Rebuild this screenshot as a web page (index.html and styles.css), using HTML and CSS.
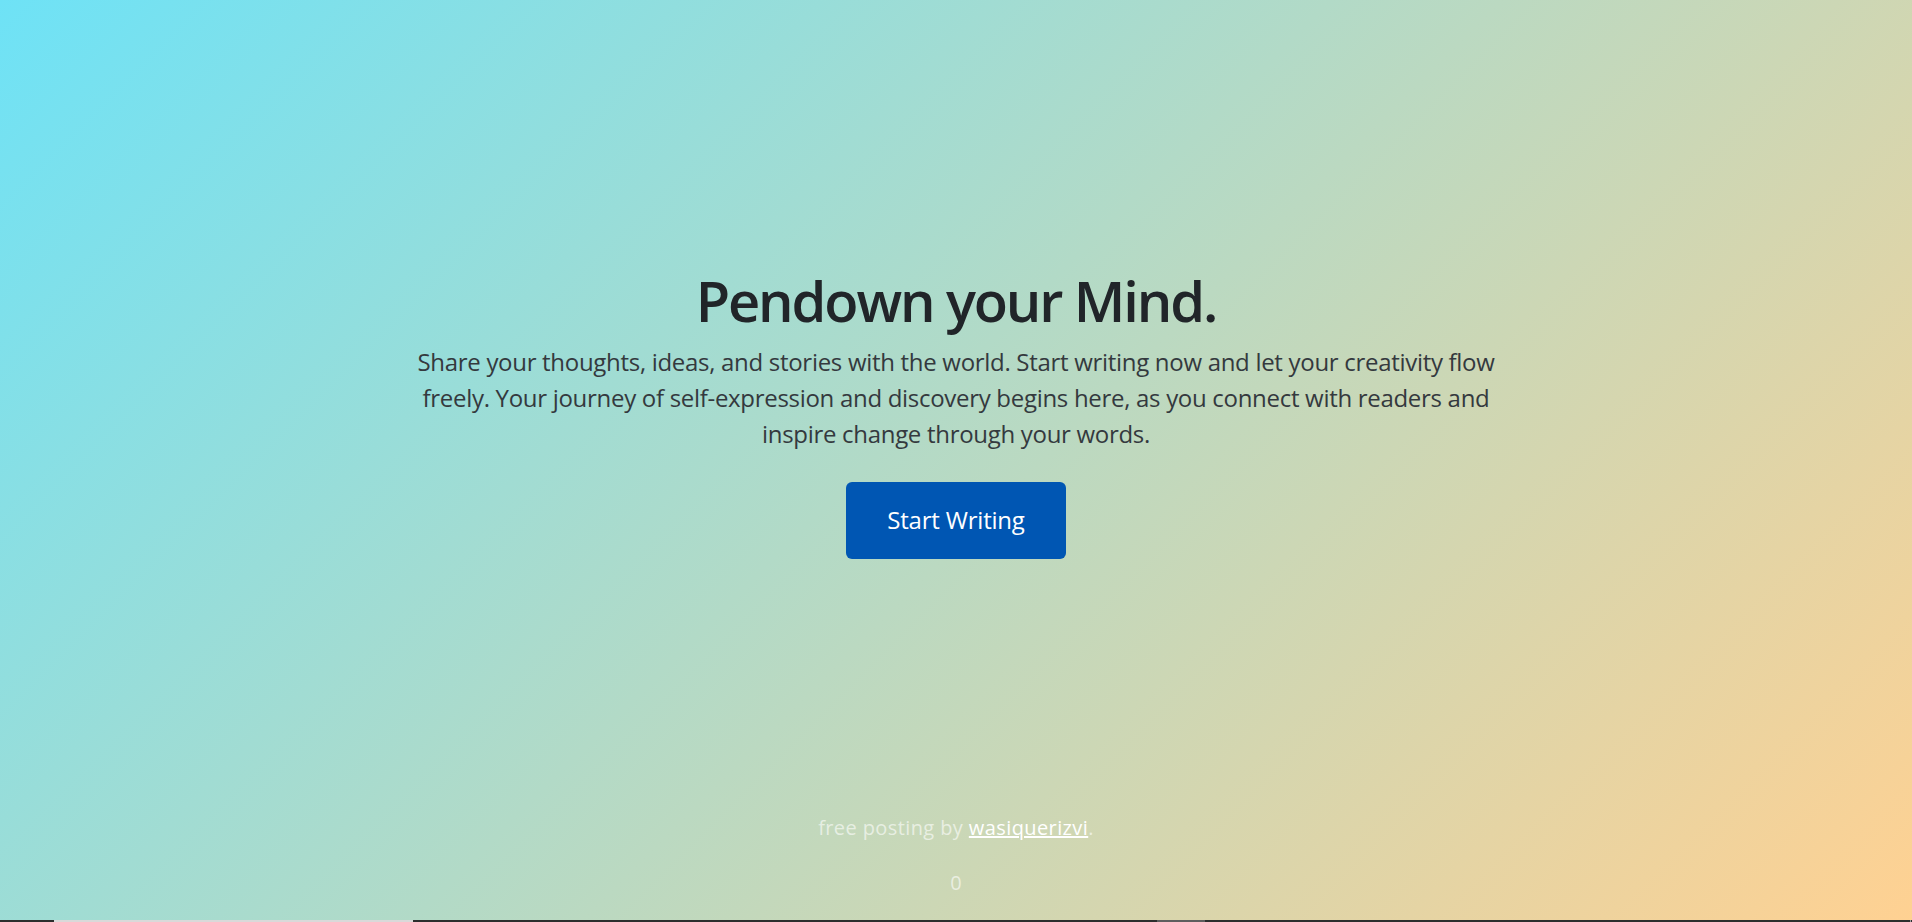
FILE: index.html
```html
<!DOCTYPE html>
<html lang="en">
<head>
<meta charset="utf-8">
<title>Pendown</title>
<link rel="stylesheet" href="styles.css">
</head>
<body>
<div class="page">
  <main class="hero">
    <div class="hero-inner">
      <h1 class="hero-title">Pendown your Mind.</h1>
      <p class="hero-lead">Share your thoughts, ideas, and stories with the world. Start writing now and let your creativity flow<br>freely. Your journey of self-expression and discovery begins here, as you connect with readers and<br>inspire change through your words.</p>
      <a class="btn-start" href="#">Start Writing</a>
    </div>
  </main>
  <footer class="site-footer">
    <p class="credit">free posting by <a class="credit-link" href="#">wasiquerizvi</a>.</p>
    <p class="counter">0</p>
  </footer>
</div>
<div class="bottom-strip">
  <span class="strip-thumb"></span>
  <span class="strip-mark"></span>
  <span class="strip-tick"></span>
</div>
</body>
</html>
```

FILE: styles.css
```css
html, body {
  margin: 0;
  padding: 0;
  height: 100%;
}

body {
  font-family: "Open Sans", "Noto Sans", "Liberation Sans", sans-serif;
  background: linear-gradient(135deg, #6ee2f6 0%, #ffd192 100%);
  color: #212529;
  overflow: hidden;
}

.page {
  height: 100vh;
  display: flex;
  flex-direction: column;
}

.hero {
  flex: 1;
  display: flex;
  align-items: center;
  justify-content: center;
  padding-top: 12px;
}

.hero-inner {
  text-align: center;
  display: flex;
  flex-direction: column;
  align-items: center;
}

.hero-title {
  margin: 0 0 10px;
  font-size: 56px;
  line-height: 1.2;
  font-weight: 600;
  letter-spacing: -2.1px;
  color: #212529;
}

.hero-lead {
  margin: 0 0 30px;
  font-size: 24px;
  line-height: 36px;
  font-weight: 400;
  color: #34393e;
  letter-spacing: -0.3px;
  white-space: nowrap;
}

.btn-start {
  display: block;
  width: 220px;
  box-sizing: border-box;
  padding: 20px 0 21px;
  font-size: 24px;
  line-height: 36px;
  color: #ffffff;
  background: #0056b3;
  border-radius: 6px;
  text-decoration: none;
  letter-spacing: -0.2px;
}

.site-footer {
  height: 108px;
  text-align: center;
  color: rgba(255, 255, 255, 0.6);
}

.credit {
  margin: 0 0 26px;
  font-size: 20px;
  line-height: 28px;
  letter-spacing: 0.4px;
}

.credit-link {
  color: #ffffff;
  text-decoration: underline;
}

.counter {
  margin: 0;
  font-size: 20px;
  line-height: 30px;
}

.bottom-strip {
  position: fixed;
  left: 0;
  right: 0;
  bottom: 0;
  height: 2px;
  background: #2c2e2d;
}

.strip-thumb {
  position: absolute;
  left: 54px;
  top: 0;
  width: 359px;
  height: 2px;
  background: #d9d9d9;
}

.strip-mark {
  position: absolute;
  left: 1157px;
  top: 0;
  width: 48px;
  height: 2px;
  background: #5e5e5e;
}

.strip-tick {
  position: absolute;
  right: 1px;
  top: 0;
  width: 1px;
  height: 2px;
  background: #9a9a9a;
}
```
